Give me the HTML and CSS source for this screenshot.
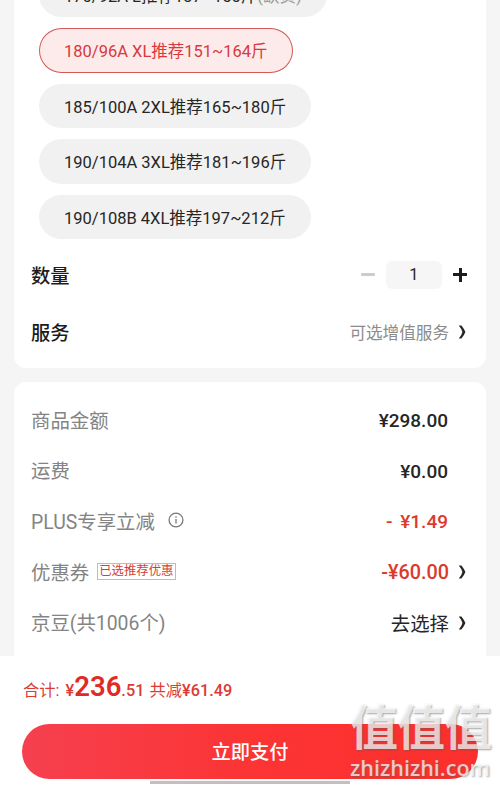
FILE: index.html
```html
<!DOCTYPE html>
<html lang="zh-CN">
<head>
    <meta charset="UTF-8">
    <title>立即支付</title>
    <link rel="stylesheet" href="styles.css">
</head>
<body>
    <div id="container">
        <div id="content">
            <div class="card goods">
                <ul class="sizes">
                    <li>170/92A L推荐137~150斤<span class="lack">(缺货)</span></li>
                    <li class="selected">180/96A XL推荐151~164斤</li>
                    <li>185/100A 2XL推荐165~180斤</li>
                    <li>190/104A 3XL推荐181~196斤</li>
                    <li>190/108B 4XL推荐197~212斤</li>
                </ul>
                <div class="option">
                    <span class="name">数量</span>
                    <div class="stepper">
                        <span class="minus"></span>
                        <span class="num">1</span>
                        <span class="plus"></span>
                    </div>
                </div>
                <div class="option service">
                    <span class="name">服务</span>
                    <span class="tip">可选增值服务</span>
                    <svg class="arrow" viewBox="0 0 8 14"><path d="M0.8 0.5 L3.4 0.5 Q6.6 4.5 7.4 7 Q6.6 9.5 3.4 13.5 L0.8 13.5 Q4 9.5 4.4 7 Q4 4.5 0.8 0.5Z"/></svg>
                </div>
            </div>
            <div class="card bill">
                <div class="row">
                    <span class="label">商品金额</span>
                    <span class="price">¥298.00</span>
                </div>
                <div class="row">
                    <span class="label">运费</span>
                    <span class="price">¥0.00</span>
                </div>
                <div class="row">
                    <span class="label">PLUS专享立减</span>
                    <svg class="info" viewBox="0 0 16 16"><circle cx="8" cy="8" r="6.9"/><path d="M8 7v4.5M8 4.2v1.5"/></svg>
                    <span class="price red minus-one">- ¥1.49</span>
                </div>
                <div class="row">
                    <span class="label">优惠券</span>
                    <span class="tag">已选推荐优惠</span>
                    <span class="price red coupon">-¥60.00</span>
                    <svg class="arrow" viewBox="0 0 8 14"><path d="M0.8 0.5 L3.4 0.5 Q6.6 4.5 7.4 7 Q6.6 9.5 3.4 13.5 L0.8 13.5 Q4 9.5 4.4 7 Q4 4.5 0.8 0.5Z"/></svg>
                </div>
                <div class="row">
                    <span class="label">京豆(共1006个)</span>
                    <span class="choose">去选择</span>
                    <svg class="arrow" viewBox="0 0 8 14"><path d="M0.8 0.5 L3.4 0.5 Q6.6 4.5 7.4 7 Q6.6 9.5 3.4 13.5 L0.8 13.5 Q4 9.5 4.4 7 Q4 4.5 0.8 0.5Z"/></svg>
                </div>
            </div>
        </div>
        <div id="footer">
            <div class="total">
                <span class="sum">合计:</span>
                <span class="yen">¥</span><span class="big">236</span><span class="cent">.51</span>
                <span class="cut">共减<b>¥61.49</b></span>
            </div>
            <div class="pay">立即支付</div>
            <div class="home"></div>
        </div>
        <div id="mark">
            <div class="zhi">值值值</div>
            <div class="site">zhizhizhi.com</div>
        </div>
    </div>
</body>
</html>
```
FILE: styles.css
```css
*{
    margin: 0;
    padding: 0;
    box-sizing: border-box;
}
body{
    font-family: Roboto, "Noto Sans CJK SC", sans-serif;
    color: #262626;
    background: #f5f5f5;
}
ul{
    list-style: none;
}
#container{
    position: relative;
    display: flex;
    flex-direction: column;
    width: 500px;
    height: 785px;
    overflow: hidden;
}
#content{
    flex: 1;
    min-height: 0;
    overflow: hidden;
    padding: 0 14px;
}
.card{
    background: #ffffff;
    border-radius: 12px;
    padding: 0 17px;
}
.goods{
    height: 408px;
    margin-top: -40px;
    padding-top: 13px;
}
/* 尺码 */
.sizes{
    display: flex;
    flex-direction: column;
    align-items: flex-start;
    gap: 11.2px;
    padding-left: 8px;
}
.sizes li{
    height: 44.3px;
    padding: 0 25px;
    border-radius: 23px;
    background: #f1f1f1;
    font-size: 16.5px;
    line-height: 47px;
    white-space: nowrap;
}
.sizes .selected{
    color: #d8393c;
    background: #fdeaea;
    box-shadow: inset 0 0 0 1px #cf5a58;
}
.sizes .lack{
    color: #999999;
}
.option{
    display: flex;
    align-items: center;
    height: 57px;
    margin-top: 7px;
}
.service{
    margin-top: 0;
}
.name{
    flex: 1;
    font-size: 19.3px;
    font-weight: 500;
    color: #1c1c1c;
}
.stepper{
    display: flex;
    align-items: center;
}
.minus{
    width: 14px;
    height: 3px;
    border-radius: 1px;
    background: #cccccc;
}
.num{
    width: 56px;
    height: 28px;
    margin: 0 11px;
    border-radius: 6px;
    background: #f6f6f6;
    font-size: 16.5px;
    line-height: 28px;
    text-align: center;
}
.plus{
    width: 14px;
    height: 14px;
    margin-right: 2px;
    background: linear-gradient(#1c1c1c, #1c1c1c) center/14px 3px no-repeat,
                linear-gradient(#1c1c1c, #1c1c1c) center/3px 14px no-repeat;
}
.tip{
    font-size: 16.6px;
    color: #8c8c8c;
}
.arrow{
    width: 8px;
    height: 14px;
    margin: 0 3px 0 9px;
    fill: #262626;
}
/* 金额 */
.bill{
    height: 300px;
    margin-top: 14px;
    padding-top: 13px;
}
.row{
    display: flex;
    align-items: center;
    height: 50.6px;
}
.label{
    padding-bottom: 2px;
    font-size: 19.4px;
    color: #848484;
}
.price{
    margin-left: auto;
    padding-top: 1px;
    font-size: 19px;
    font-weight: 500;
}
.price:last-child{
    margin-right: 21px;
}
.red{
    color: #dc3a2c;
}
.minus-one{
    word-spacing: 3px;
}
.coupon{
    padding-top: 0;
    font-size: 19.8px;
}
.info{
    width: 16px;
    height: 16px;
    margin: 0 0 3px 13px;
    fill: none;
    stroke: #777777;
    stroke-width: 1.3;
}
.tag{
    height: 17px;
    margin: 0 0 2px 8px;
    padding: 0 1px;
    border: 1px solid #eda9a3;
    font-size: 12.4px;
    line-height: 14px;
    color: #d23f35;
}
.choose{
    margin-left: auto;
    font-size: 19.4px;
}
/* 底部 */
#footer{
    height: 129px;
    background: #ffffff;
    color: #dc3a36;
}
.total{
    height: 68px;
    padding-left: 23px;
    font-size: 16.3px;
    line-height: 62px;
    white-space: nowrap;
}
.yen{
    margin-left: 2px;
}
.yen, .cent, .cut b{
    font-weight: 500;
}
.big{
    font-size: 27.5px;
    font-weight: 600;
    color: #e02a26;
}
.cut{
    margin-left: 1px;
}
.pay{
    height: 55px;
    margin: 0 22px;
    border-radius: 28px;
    background: linear-gradient(90deg, #f6404f, #fb3434 50%, #fb302c);
    color: #ffffff;
    font-size: 19.3px;
    font-weight: 500;
    line-height: 58px;
    text-align: center;
}
.home{
    width: 200px;
    height: 3px;
    margin: 2px auto 0;
    background: #c4bebe;
}
/* 水印 */
#mark{
    position: absolute;
    left: 350px;
    top: 702px;
    color: rgba(255, 255, 255, .72);
    text-shadow: 1px 1px 2px rgba(90, 90, 90, .55);
    white-space: nowrap;
}
.zhi{
    font-size: 48px;
    font-weight: 700;
    letter-spacing: -1px;
    line-height: 54px;
}
.site{
    font-family: "Open Sans", sans-serif;
    font-size: 21.5px;
    font-weight: 600;
    line-height: 24px;
}
```
